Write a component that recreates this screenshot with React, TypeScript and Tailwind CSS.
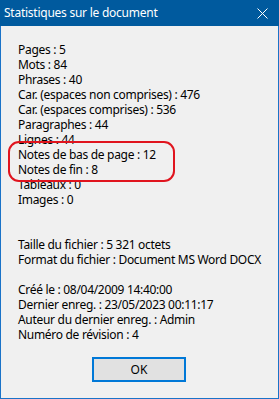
import React from "react";

const lines1 = [
  "Pages : 5",
  "Mots : 84",
  "Phrases : 40",
  "Car. (espaces non comprises) : 476",
  "Car. (espaces comprises) : 536",
  "Paragraphes : 44",
  "Lignes : 44",
  "Notes de bas de page : 12",
  "Notes de fin : 8",
  "Tableaux : 0",
  "Images : 0",
];
const lines2 = ["Taille du fichier : 5 321 octets", "Format du fichier : Document MS Word DOCX"];
const lines3 = [
  "Créé le : 08/04/2009 14:40:00",
  "Dernier enreg. : 23/05/2023 00:11:17",
  "Auteur du dernier enreg. : Admin",
  "Numéro de révision : 4",
];

export default function App() {
  const font = { fontFamily: '"Noto Sans", "Segoe UI", sans-serif' };
  return (
    <div className="w-[279px] h-[399px] flex flex-col bg-[#f0f0f0] text-black" style={font}>
      <div className="h-[26px] bg-[#005a9e] flex items-center justify-between pl-[4px] pr-[11px] text-white text-[12px] tracking-[-0.25px]">
        <span>Statistiques sur le document</span>
        <svg width="11" height="11" viewBox="0 0 11 11" className="block">
          <path d="M0.5 0.5 L10.5 10.5 M10.5 0.5 L0.5 10.5" stroke="white" strokeWidth="1" />
        </svg>
      </div>
      <div className="relative flex-1 flex flex-col border-x border-b border-[#1a73c8] pl-[17px] pt-[16px] text-[12px] leading-[15px] tracking-[-0.3px]">
        {lines1.map((l) => (
          <div key={l}>{l}</div>
        ))}
        <div className="h-[30px]" />
        {lines2.map((l) => (
          <div key={l}>{l}</div>
        ))}
        <div className="h-[15px]" />
        {lines3.map((l) => (
          <div key={l}>{l}</div>
        ))}
        <div className="flex justify-center mt-[15px] pr-[17px]">
          <button className="ml-[-1px] w-[94px] h-[25px] border-2 border-[#0078d7] bg-[#e1e1e1] text-[12px] leading-none tracking-normal">
            OK
          </button>
        </div>
        <div className="absolute left-[7px] top-[115px] w-[167px] h-[41px] rounded-[11px] border-2 border-[#e0141e]" />
      </div>
    </div>
  );
}
